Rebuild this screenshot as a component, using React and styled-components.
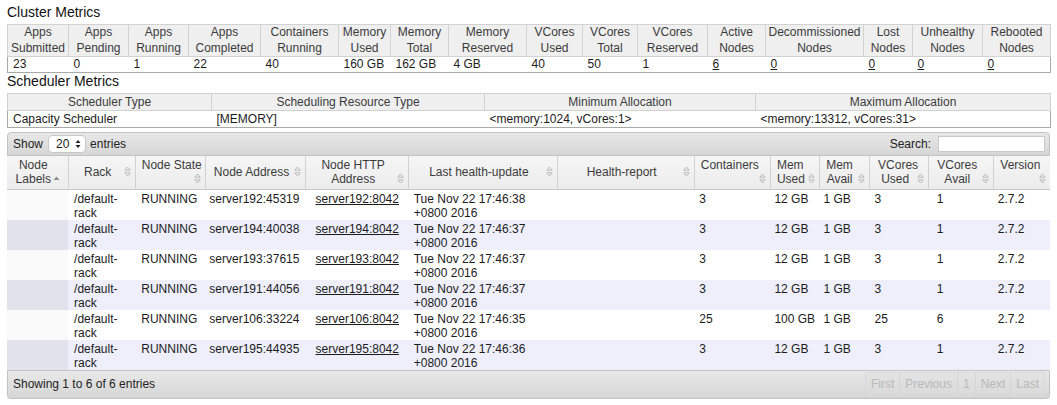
import React from 'react';
import styled, { createGlobalStyle } from 'styled-components';

// Palette
const colors = {
  text: '#1c1c1c',
  headText: '#3b3b3b',
  headBg: '#efefef',
  line: '#d2d2d2',
  darkLine: '#a9a9a9',
  stripe: '#eeeffb',
  sortedStripe: '#e1e2ec',
  sortedPlain: '#fafafa',
  muted: '#b9b9b9',
};

const GlobalStyle = createGlobalStyle`
  html, body { margin: 0; background: #fff; }
  body {
    padding: 4px 7px 0;
    font-family: 'Liberation Sans', Arial, Helvetica, sans-serif;
    font-size: 12px;
    color: ${colors.text};
  }
`;

const SectionTitle = styled.div`
  font-size: 14px;
  line-height: 17px;
  color: #111;
  margin-bottom: 3px;
`;

const InfoTable = styled.table`
  width: 100%;
  border-collapse: collapse;
  table-layout: fixed;
`;

const InfoHead = styled.th`
  font-weight: normal;
  color: ${colors.headText};
  background: ${colors.headBg};
  border: 1px solid ${colors.line};
  padding: 0 2px;
  line-height: ${(p) => (p.$tall ? 15.5 : 16)}px;
  text-align: center;
  white-space: nowrap;
`;

const InfoCell = styled.td`
  border-bottom: 1px solid ${colors.darkLine};
  padding: 0 5px;
  line-height: ${(p) => (p.$tall ? 16 : 15)}px;
  white-space: nowrap;
  &:first-child { border-left: 1px solid ${colors.darkLine}; }
  &:last-child { border-right: 1px solid ${colors.darkLine}; }
`;

const Link = styled.a`
  color: ${colors.text};
  text-decoration: underline;
`;

// DataTables block
const Wrapper = styled.div`
  margin-top: 4px;
`;

const Bar = styled.div`
  display: flex;
  align-items: center;
  justify-content: space-between;
  height: ${(p) => (p.$bottom ? 27 : 22)}px;
  padding: 0 4px 0 5px;
  border: 1px solid #c3c3c3;
  border-radius: ${(p) => (p.$bottom ? '0 0 4px 4px' : '4px 4px 0 0')};
  background: linear-gradient(#e8e8e8, #d6d6d6);
  box-shadow: ${(p) => (p.$bottom ? '0 1px 1px rgba(0,0,0,0.15)' : 'none')};
  color: #222;
`;

const Group = styled.div`
  display: flex;
  align-items: center;
  gap: 4px;
`;

const SelectBox = styled.div`
  display: flex;
  align-items: center;
  justify-content: space-between;
  width: 36px;
  height: 16px;
  box-sizing: border-box;
  padding: 0 4px 0 7px;
  margin: 0 1px 0 2px;
  background: #fff;
  border-radius: 4px;
  box-shadow: 0 0 0 1px #c8c8c8;
`;

const SearchInput = styled.div`
  width: 107px;
  height: 16px;
  background: #fff;
  border: 1px solid #c9c9c9;
  box-sizing: border-box;
  margin-left: 3px;
`;

const Pager = styled.div`
  display: flex;
  height: 22px;
  border: 1px solid #d9d9d9;
  border-radius: 2px;
  background: linear-gradient(#e3e3e3, #dadada);
`;

const PageButton = styled.span`
  display: flex;
  align-items: center;
  padding: 0 5px;
  color: ${colors.muted};
  & + & { border-left: 1px solid #d4d4d4; }
`;

const GridTable = styled.table`
  width: 100%;
  border-collapse: collapse;
  table-layout: fixed;
`;

const GridHead = styled.th`
  font-weight: normal;
  color: ${colors.headText};
  background: linear-gradient(#f5f5f5, #ececec);
  border-right: 1px solid ${colors.line};
  border-bottom: 1px solid #c8c8c8;
  height: 33px;
  box-sizing: border-box;
  padding: 1px 16px 1px ${(p) => p.$left}px;
  line-height: 14px;
  text-align: center;
  vertical-align: middle;
  white-space: nowrap;
  &:last-child { border-right: none; }
`;

const HeadInner = styled.div`
  position: relative;
`;

const SortMark = styled.span`
  position: absolute;
  right: ${(p) => p.$right}px;
  bottom: 2px;
  display: flex;
`;

const GridRow = styled.tr`
  background: ${(p) => (p.$even ? colors.stripe : '#fff')};
`;

const GridCell = styled.td`
  height: 30px;
  box-sizing: border-box;
  padding: 2px 4px 0 ${(p) => p.$indent}px;
  line-height: 14px;
  vertical-align: top;
  white-space: nowrap;
  background: ${(p) => (p.$sorted ? (p.$even ? colors.sortedStripe : colors.sortedPlain) : 'transparent')};
`;

// Icons
const SortBoth = () => (
  <svg width="7" height="11" viewBox="0 0 7 11">
    <path d="M0.8 4.2 L3.5 1 L6.2 4.2 Z M0.8 6.8 L3.5 10 L6.2 6.8 Z" fill="none" stroke="#b4b4b4" strokeWidth="0.9" />
  </svg>
);

const SortAsc = () => (
  <svg width="7" height="11" viewBox="0 0 7 11">
    <path d="M0.5 7 L3.5 3.5 L6.5 7 Z" fill="#8e8e8e" />
  </svg>
);

const UpDown = () => (
  <svg width="6" height="10" viewBox="0 0 6 10">
    <path d="M0.5 4 L3 1 L5.5 4 Z M0.5 6 L3 9 L5.5 6 Z" fill="#222" />
  </svg>
);

// Data
const clusterCols = [
  ['Apps', 'Submitted', 61, '23'],
  ['Apps', 'Pending', 60, '0'],
  ['Apps', 'Running', 60, '1'],
  ['Apps', 'Completed', 72, '22'],
  ['Containers', 'Running', 78, '40'],
  ['Memory', 'Used', 52, '160 GB'],
  ['Memory', 'Total', 58, '162 GB'],
  ['Memory', 'Reserved', 78, '4 GB'],
  ['VCores', 'Used', 56, '40'],
  ['VCores', 'Total', 55, '50'],
  ['VCores', 'Reserved', 70, '1'],
  ['Active', 'Nodes', 58, '6', true],
  ['Decommissioned', 'Nodes', 98, '0', true],
  ['Lost', 'Nodes', 49, '0', true],
  ['Unhealthy', 'Nodes', 70, '0', true],
  ['Rebooted', 'Nodes', 68, '0', true],
];

const schedCols = [
  ['Scheduler Type', 204, 'Capacity Scheduler'],
  ['Scheduling Resource Type', 273, '[MEMORY]'],
  ['Minimum Allocation', 271, '<memory:1024, vCores:1>'],
  ['Maximum Allocation', 295, '<memory:13312, vCores:31>'],
];

// header lines, column width, header left padding, body indent
const nodeCols = [
  { lines: ['Node', 'Labels'], w: 61, left: 8, indent: 5, asc: true },
  { lines: ['Rack'], w: 67, left: 8, indent: 6 },
  { lines: ['Node State', ''], w: 70, left: 6, indent: 6 },
  { lines: ['Node Address'], w: 100, left: 8, indent: 4 },
  { lines: ['Node HTTP', 'Address'], w: 103, left: 8, indent: 10 },
  { lines: ['Last health-update'], w: 148, left: 8, indent: 5 },
  { lines: ['Health-report'], w: 137, left: 8, indent: 5 },
  { lines: ['Containers', ''], w: 76, left: 6, indent: 5 },
  { lines: ['Mem', 'Used'], w: 49, left: 6, indent: 4 },
  { lines: ['Mem', 'Avail'], w: 50, left: 6, indent: 4 },
  { lines: ['VCores', 'Used'], w: 59, left: 8, indent: 5 },
  { lines: ['VCores', 'Avail'], w: 65, left: 8, indent: 8 },
  { lines: ['Version', ''], w: 56, left: 6, indent: 4 },
];

const nodes = [
  ['server192:45319', 'server192:8042', '17:46:38', '3', '12 GB', '3', '1'],
  ['server194:40038', 'server194:8042', '17:46:37', '3', '12 GB', '3', '1'],
  ['server193:37615', 'server193:8042', '17:46:37', '3', '12 GB', '3', '1'],
  ['server191:44056', 'server191:8042', '17:46:37', '3', '12 GB', '3', '1'],
  ['server106:33224', 'server106:8042', '17:46:35', '25', '100 GB', '25', '6'],
  ['server195:44935', 'server195:8042', '17:46:36', '3', '12 GB', '3', '1'],
];

const NodeRow = ({ node, even }) => {
  const [addr, http, time, containers, mem, used, avail] = node;
  const cells = [
    '',
    <>/default-<br />rack</>,
    'RUNNING',
    addr,
    <Link>{http}</Link>,
    <>Tue Nov 22 {time}<br />+0800 2016</>,
    '',
    containers,
    mem,
    '1 GB',
    used,
    avail,
    '2.7.2',
  ];
  return (
    <GridRow $even={even}>
      {cells.map((c, i) => (
        <GridCell key={i} $indent={nodeCols[i].indent} $sorted={i === 0} $even={even}>
          {c}
        </GridCell>
      ))}
    </GridRow>
  );
};

const App = () => (
  <>
    <GlobalStyle />
    <SectionTitle>Cluster Metrics</SectionTitle>
    <InfoTable>
      <colgroup>
        {clusterCols.map((c, i) => <col key={i} style={{ width: c[2] }} />)}
      </colgroup>
      <thead>
        <tr>
          {clusterCols.map((c, i) => (
            <InfoHead key={i} $tall>{c[0]}<br />{c[1]}</InfoHead>
          ))}
        </tr>
      </thead>
      <tbody>
        <tr>
          {clusterCols.map((c, i) => (
            <InfoCell key={i}>{c[4] ? <Link>{c[3]}</Link> : c[3]}</InfoCell>
          ))}
        </tr>
      </tbody>
    </InfoTable>

    <SectionTitle>Scheduler Metrics</SectionTitle>
    <InfoTable>
      <colgroup>
        {schedCols.map((c, i) => <col key={i} style={{ width: c[1] }} />)}
      </colgroup>
      <thead>
        <tr>
          {schedCols.map((c, i) => <InfoHead key={i}>{c[0]}</InfoHead>)}
        </tr>
      </thead>
      <tbody>
        <tr>
          {schedCols.map((c, i) => <InfoCell key={i} $tall>{c[2]}</InfoCell>)}
        </tr>
      </tbody>
    </InfoTable>

    <Wrapper>
      <Bar>
        <Group>
          Show
          <SelectBox>20<UpDown /></SelectBox>
          entries
        </Group>
        <Group>
          Search:
          <SearchInput />
        </Group>
      </Bar>
      <GridTable>
        <colgroup>
          {nodeCols.map((c, i) => <col key={i} style={{ width: c.w }} />)}
        </colgroup>
        <thead>
          <tr>
            {nodeCols.map((c, i) => (
              <GridHead key={i} $left={c.left}>
                <HeadInner>
                  {c.lines.map((l, j) => (
                    <div key={j}>{l || '\u00a0'}</div>
                  ))}
                  <SortMark $right={c.asc ? -8 : -12}>
                    {c.asc ? <SortAsc /> : <SortBoth />}
                  </SortMark>
                </HeadInner>
              </GridHead>
            ))}
          </tr>
        </thead>
        <tbody>
          {nodes.map((n, i) => <NodeRow key={i} node={n} even={i % 2 === 1} />)}
        </tbody>
      </GridTable>
      <Bar $bottom>
        <span>Showing 1 to 6 of 6 entries</span>
        <Pager>
          <PageButton>First</PageButton>
          <PageButton>Previous</PageButton>
          <PageButton>1</PageButton>
          <PageButton>Next</PageButton>
          <PageButton>Last</PageButton>
        </Pager>
      </Bar>
    </Wrapper>
  </>
);

export default App;
